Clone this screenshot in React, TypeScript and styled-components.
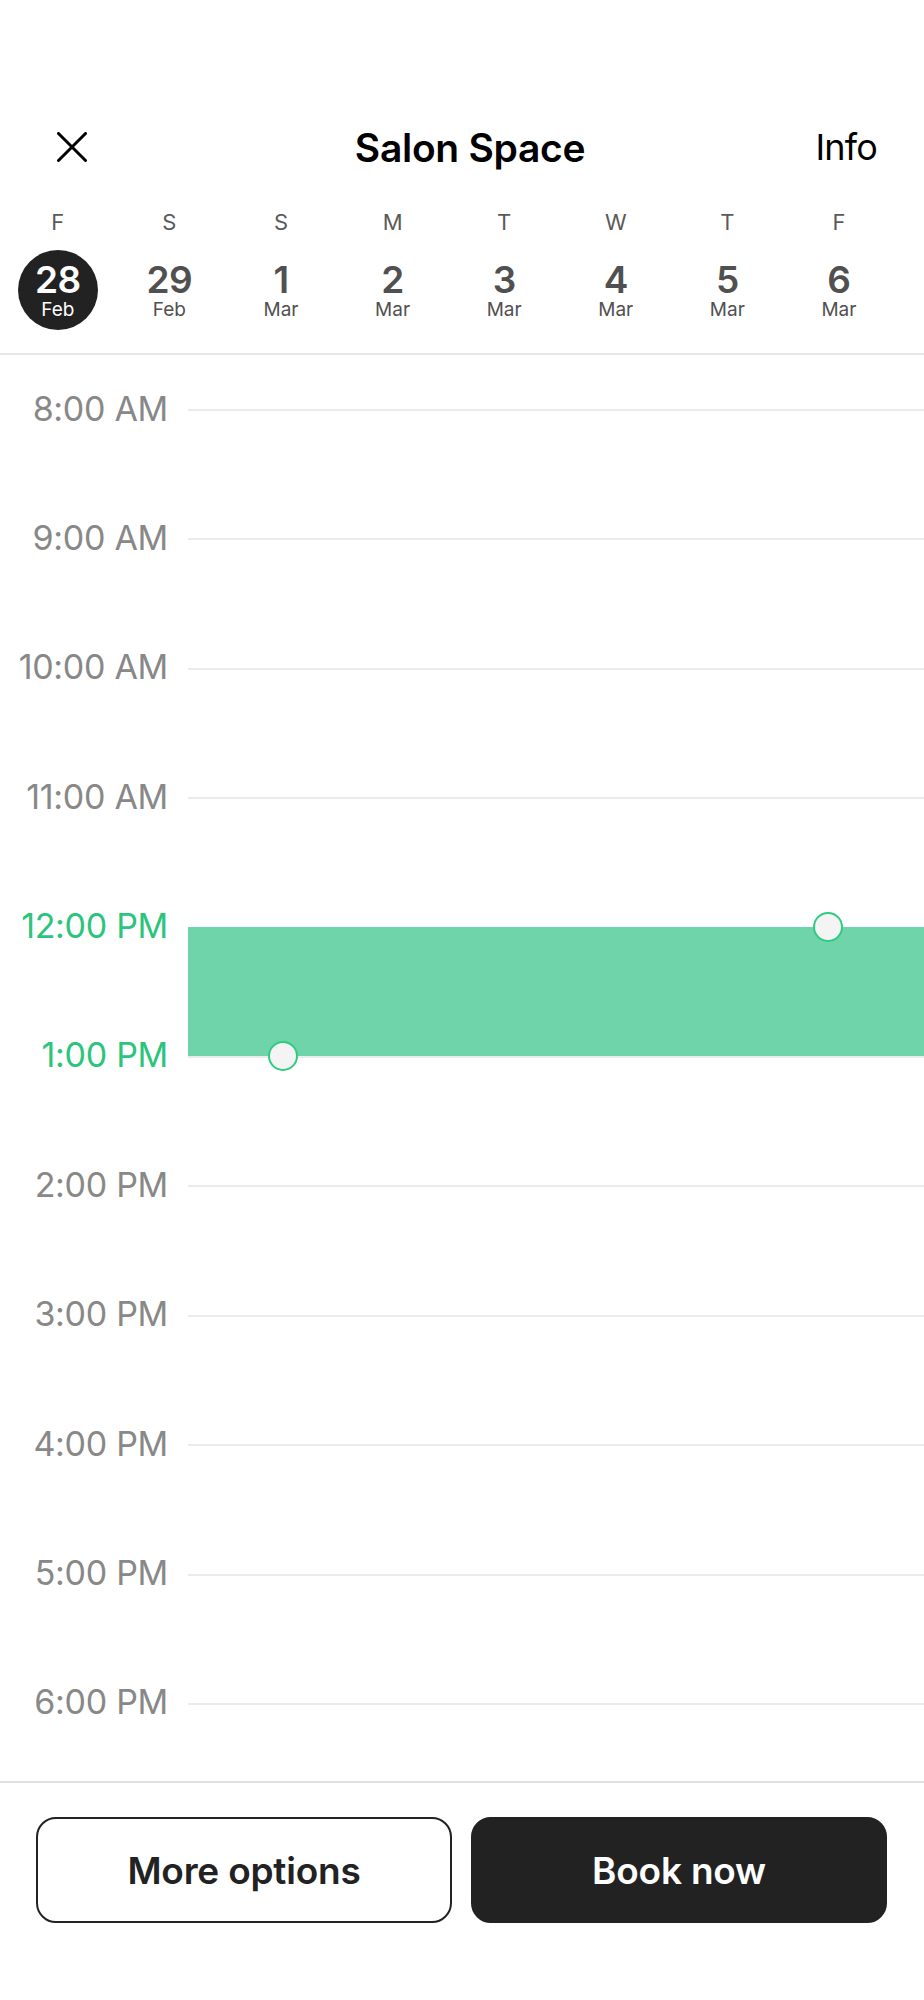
import React from "react";
import styled, { createGlobalStyle } from "styled-components";

const GlobalStyle = createGlobalStyle`
  html, body { margin: 0; padding: 0; background: #ffffff; }
  body { font-family: Inter, "Noto Sans", "Liberation Sans", sans-serif; -webkit-font-smoothing: antialiased; }
  * { box-sizing: border-box; }
`;

const Screen = styled.div`
  width: 924px;
  height: 2000px;
  display: flex;
  flex-direction: column;
  background: #ffffff;
  overflow: hidden;
`;

const Header = styled.header`
  margin-top: 108px;
  height: 78px;
  display: grid;
  grid-template-columns: 1fr auto 1fr;
  align-items: center;
  padding: 0 47px 0 57px;
`;

const CloseButton = styled.button`
  width: 30px;
  height: 30px;
  padding: 0;
  border: none;
  background: none;
  display: flex;
  justify-self: start;
`;

const Title = styled.h1`
  margin: 0 0 0 6px;
  font-size: 39px;
  font-weight: 600;
  letter-spacing: -0.3px;
  color: #000000;
`;

const InfoLink = styled.span`
  justify-self: end;
  font-size: 36px;
  font-weight: 400;
  letter-spacing: -0.8px;
  color: #000000;
`;

const DayStrip = styled.div`
  display: flex;
  padding: 22px 0 23px 2px;
  border-bottom: 2px solid #e6e6e6;
`;

const DayCell = styled.div`
  width: 111.6px;
  flex: none;
  display: flex;
  flex-direction: column;
  align-items: center;
  gap: 14px;
`;

const Weekday = styled.span`
  font-size: 22px;
  line-height: 28px;
  color: #5a5a5a;
`;

const DateBadge = styled.div<{ $selected?: boolean }>`
  width: 80px;
  height: 80px;
  border-radius: 50%;
  display: flex;
  flex-direction: column;
  align-items: center;
  padding-top: 11px;
  background: ${(p) => (p.$selected ? "#222222" : "transparent")};
  color: ${(p) => (p.$selected ? "#ffffff" : "#505050")};
`;

const DayNumber = styled.span`
  font-size: 37px;
  line-height: 38px;
  font-weight: 600;
  letter-spacing: -0.5px;
`;

const MonthLabel = styled.span`
  font-size: 19px;
  line-height: 22px;
`;

const Timeline = styled.div`
  flex: 1;
  position: relative;
  overflow: hidden;
`;

const HourList = styled.div`
  display: flex;
  flex-direction: column;
  gap: 93.4px;
  padding-top: 37px;
`;

const HourRow = styled.div`
  height: 36px;
  display: flex;
  align-items: center;
`;

const HourLabel = styled.span<{ $active?: boolean }>`
  width: 168px;
  flex: none;
  margin-bottom: 4px;
  text-align: right;
  font-size: 34px;
  letter-spacing: -0.3px;
  color: ${(p) => (p.$active ? "#2bc47d" : "#888888")};
`;

const HourLine = styled.div`
  flex: 1;
  height: 2px;
  margin-left: 20px;
  background: #ebebeb;
`;

const Selection = styled.div`
  position: absolute;
  top: 572px;
  left: 188px;
  right: 0;
  height: 129.4px;
  background: #6fd4aa;
`;

const Handle = styled.div<{ $pos: "top" | "bottom" }>`
  position: absolute;
  width: 30px;
  height: 30px;
  border-radius: 50%;
  background: #f4f4f4;
  border: 2.5px solid #2ecc80;
  ${(p) => (p.$pos === "top" ? "top: -15px; left: 625px;" : "bottom: -15px; left: 80px;")}
`;

const Footer = styled.footer`
  height: 219px;
  border-top: 2px solid #e0e0e0;
  display: flex;
  gap: 19px;
  padding: 34px 37px 0 36px;
`;

const ActionButton = styled.button<{ $primary?: boolean }>`
  flex: 1;
  height: 106px;
  border-radius: 20px;
  border: 2px solid #222222;
  background: ${(p) => (p.$primary ? "#222222" : "#ffffff")};
  color: ${(p) => (p.$primary ? "#ffffff" : "#222222")};
  font-family: inherit;
  font-size: 37px;
  font-weight: 600;
  letter-spacing: -0.2px;
`;

const days = [
  { w: "F", d: "28", m: "Feb", selected: true },
  { w: "S", d: "29", m: "Feb" },
  { w: "S", d: "1", m: "Mar" },
  { w: "M", d: "2", m: "Mar" },
  { w: "T", d: "3", m: "Mar" },
  { w: "W", d: "4", m: "Mar" },
  { w: "T", d: "5", m: "Mar" },
  { w: "F", d: "6", m: "Mar" },
];

const hours = [
  "8:00 AM",
  "9:00 AM",
  "10:00 AM",
  "11:00 AM",
  "12:00 PM",
  "1:00 PM",
  "2:00 PM",
  "3:00 PM",
  "4:00 PM",
  "5:00 PM",
  "6:00 PM",
];

const active = new Set(["12:00 PM", "1:00 PM"]);

export default function App() {
  return (
    <>
      <GlobalStyle />
      <Screen>
        <Header>
          <CloseButton aria-label="Close">
            <svg width="30" height="30" viewBox="0 0 30 30" fill="none">
              <path d="M1.5 1.5 L28.5 28.5 M28.5 1.5 L1.5 28.5" stroke="#000" strokeWidth="3" strokeLinecap="round" />
            </svg>
          </CloseButton>
          <Title>Salon Space</Title>
          <InfoLink>Info</InfoLink>
        </Header>
        <DayStrip>
          {days.map((day, i) => (
            <DayCell key={i}>
              <Weekday>{day.w}</Weekday>
              <DateBadge $selected={day.selected}>
                <DayNumber>{day.d}</DayNumber>
                <MonthLabel>{day.m}</MonthLabel>
              </DateBadge>
            </DayCell>
          ))}
        </DayStrip>
        <Timeline>
          <HourList>
            {hours.map((h) => (
              <HourRow key={h}>
                <HourLabel $active={active.has(h)}>{h}</HourLabel>
                <HourLine />
              </HourRow>
            ))}
          </HourList>
          <Selection>
            <Handle $pos="top" />
            <Handle $pos="bottom" />
          </Selection>
        </Timeline>
        <Footer>
          <ActionButton>More options</ActionButton>
          <ActionButton $primary>Book now</ActionButton>
        </Footer>
      </Screen>
    </>
  );
}
